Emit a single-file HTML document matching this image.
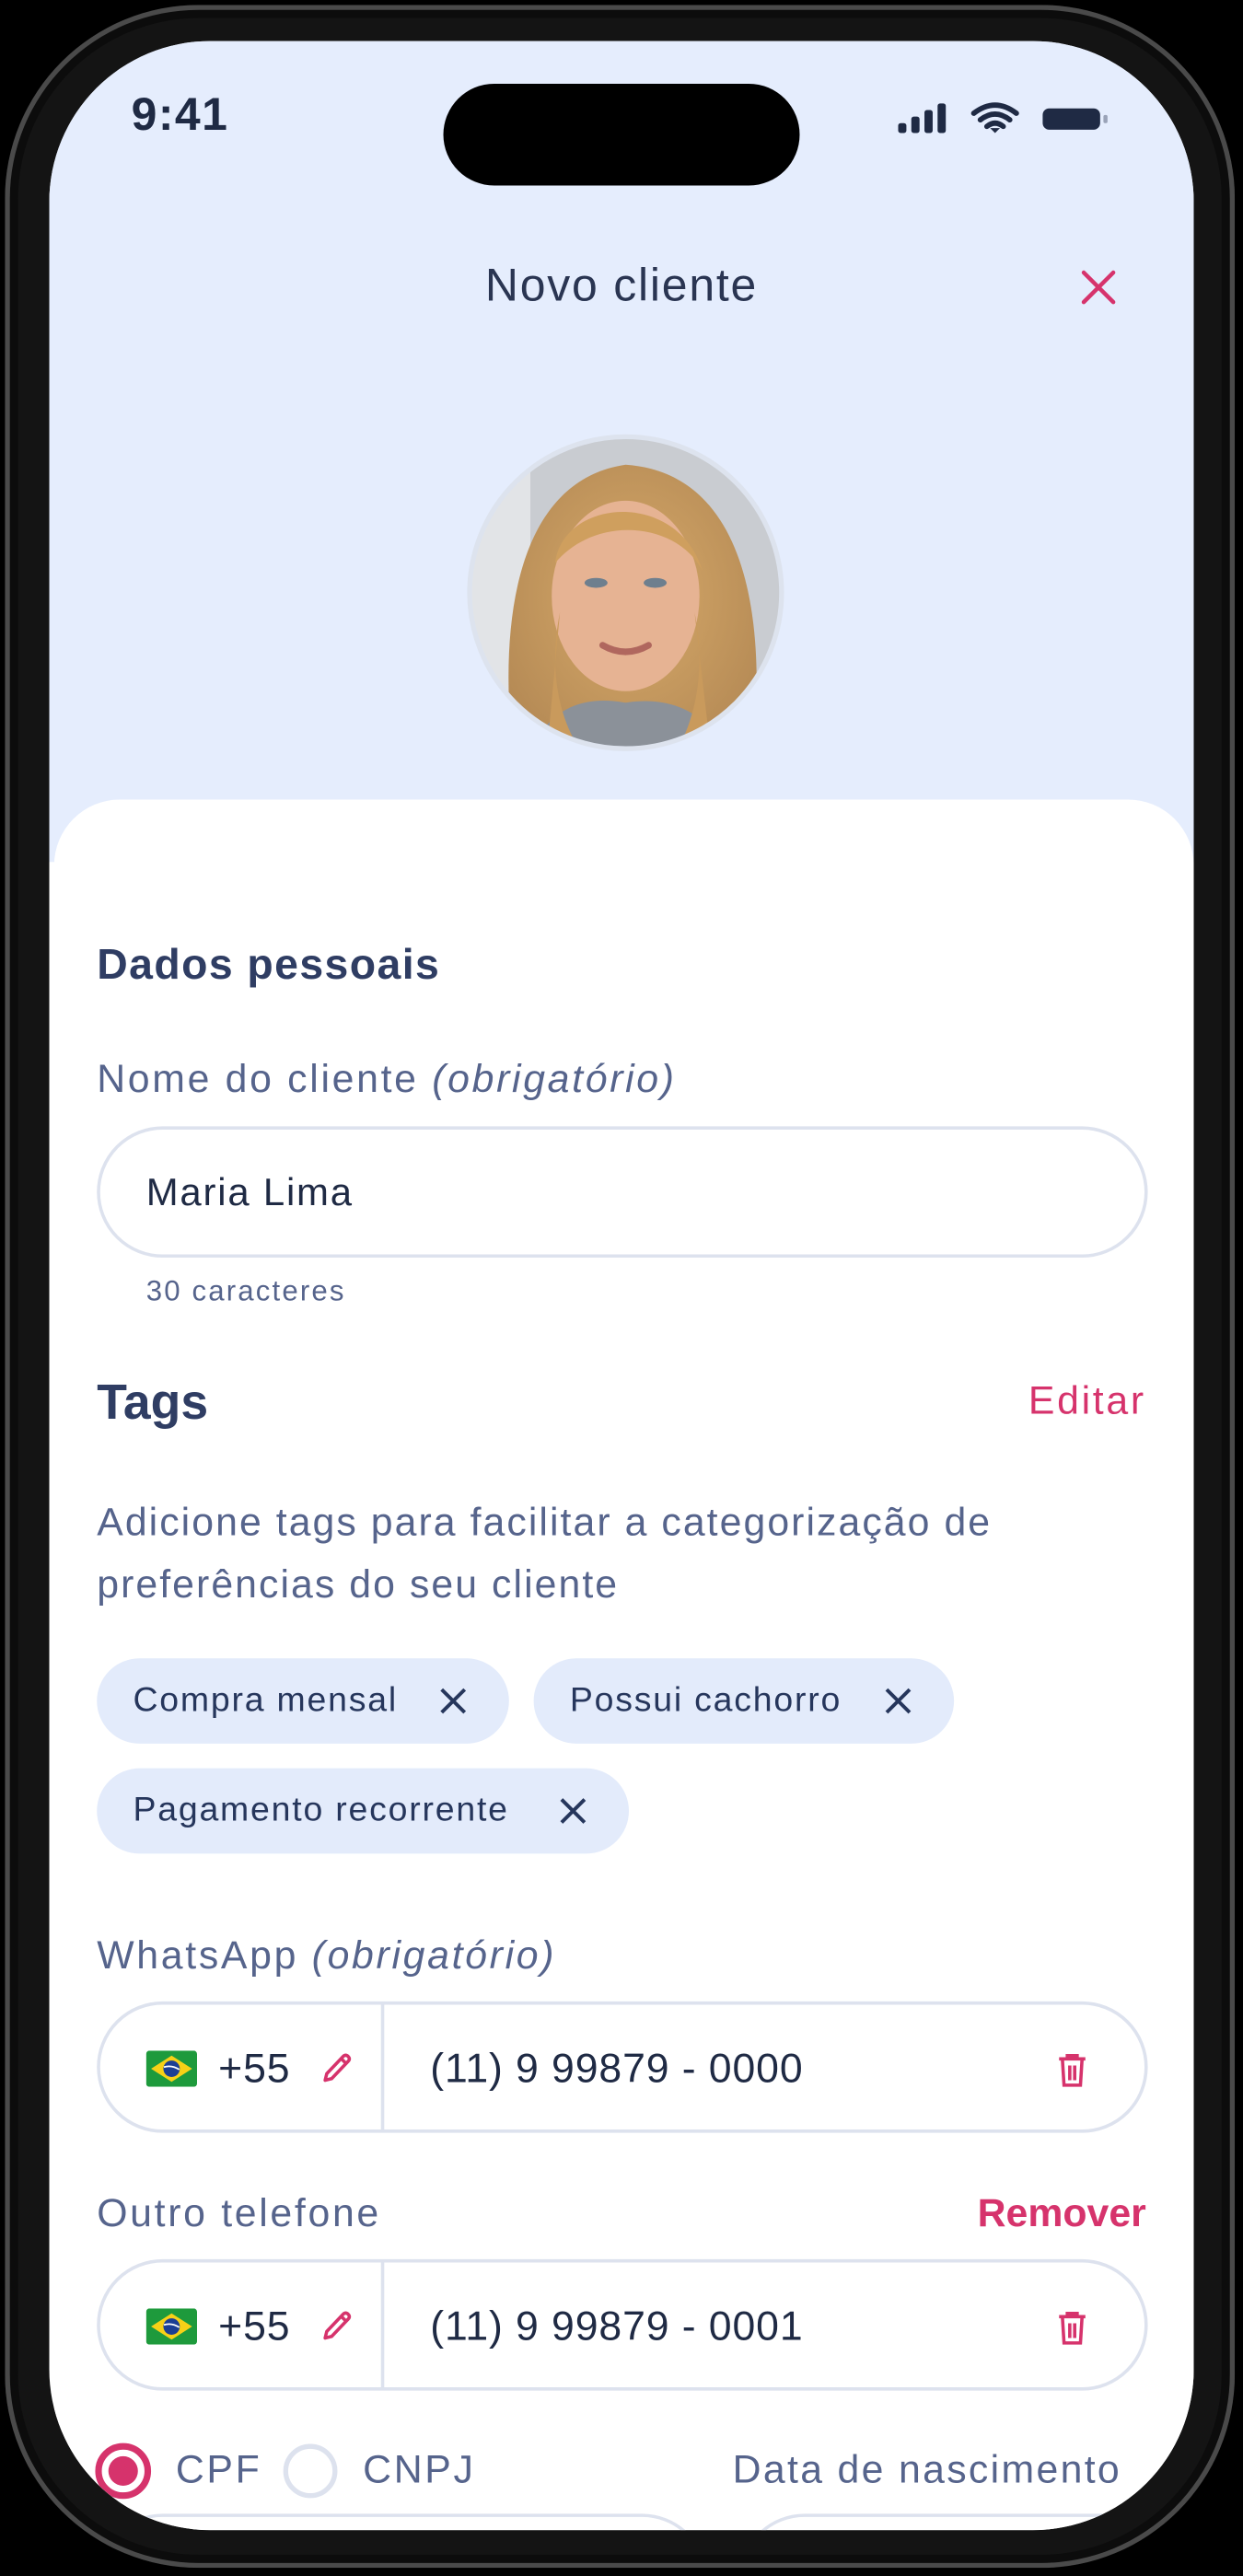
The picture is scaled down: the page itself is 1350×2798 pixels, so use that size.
<!DOCTYPE html>
<html><head><meta charset="utf-8"><style>
html,body{margin:0;padding:0;background:#000;width:1350px;height:2797px;overflow:hidden}
#w{position:absolute;left:0;top:0;width:757px;height:1569px;transform:scale(1.78336);transform-origin:0 0;font-family:"Liberation Sans",sans-serif}
.a{position:absolute}
.body{left:3px;top:3px;width:749px;height:1561px;border-radius:118px;background:#141414;box-shadow:inset 0 0 0 3px #4a4a4a,inset 0 0 0 8px #0c0c0c}
.screen{left:30px;top:25px;width:697px;height:1516px;border-radius:98px;background:#fff;overflow:hidden}
.top{left:0;top:0;width:697px;height:500px;background:#e5edfd}
.card{left:3px;top:462px;width:694px;height:1100px;background:#fff;border-radius:40px 40px 0 0}
.t{position:absolute;white-space:nowrap}
.lbl{font-size:24px;letter-spacing:1.5px;color:#56648c}
.inp{position:absolute;left:29px;width:640px;height:80px;border:2px solid #dde2ee;border-radius:40px;box-sizing:border-box}
.chip{position:absolute;height:52px;border-radius:26px;background:#e3ebfb;font-size:21px;letter-spacing:1px;color:#26365c;line-height:52px;padding-left:22px;box-sizing:border-box}
.chip svg{position:absolute;top:17px}
.num{font-size:25px;letter-spacing:0.5px;color:#1f2a44}
</style></head><body><div id="w">
<div class="a body"></div>
<div class="a screen">
 <div class="a top"></div>
 <div class="a card"></div>
 <div class="a" style="left:240px;top:26px;width:217px;height:62px;border-radius:31px;background:#000"></div>
 <div class="t" style="left:50px;top:29px;font-size:28px;letter-spacing:0.8px;font-weight:bold;color:#1f2a44">9:41</div>
 <svg class="a" style="left:516px;top:37px" width="135" height="20" viewBox="0 0 135 20">
  <rect x="1" y="13" width="5" height="6" rx="1.5" fill="#1f2a44"/><rect x="9" y="9" width="5" height="10" rx="1.5" fill="#1f2a44"/><rect x="17" y="5" width="5" height="14" rx="1.5" fill="#1f2a44"/><rect x="25" y="1" width="5" height="18" rx="1.5" fill="#1f2a44"/>
  <path d="M47 7 Q60 -3 73 7 M51 11 Q60 4 69 11 M55 15 Q60 11 65 15" stroke="#1f2a44" stroke-width="3.2" fill="none" stroke-linecap="round"/><path d="M57 16 L60 19 L63 16 Z" fill="#1f2a44"/>
  <rect x="89" y="4" width="35" height="13" rx="4" fill="#1f2a44"/><rect x="126" y="8" width="2.5" height="5" rx="1" fill="#9aa3b8"/>
 </svg>
 <div class="t" style="left:0;width:697px;text-align:center;top:133px;font-size:28px;letter-spacing:1px;color:#2a3552">Novo cliente</div>
 <svg class="a" style="left:628px;top:139px" width="22" height="22" viewBox="0 0 22 22"><path d="M2 2L20 20M20 2L2 20" stroke="#d6336c" stroke-width="2.5" stroke-linecap="round"/></svg>
 <svg class="a" style="left:253px;top:238px" width="196" height="196" viewBox="0 0 196 196">
  <defs><clipPath id="c"><circle cx="98" cy="98" r="94"/></clipPath>
  <radialGradient id="hair" cx="50%" cy="45%" r="60%"><stop offset="0" stop-color="#d7aa6a"/><stop offset="1" stop-color="#b58a55"/></radialGradient></defs>
  <g clip-path="url(#c)">
   <rect width="196" height="196" fill="#c9ccd1"/>
   <rect x="0" y="0" width="40" height="196" fill="#e2e4e7"/>
   <path d="M30 200 C20 120 30 30 98 20 C170 25 185 110 175 200Z" fill="url(#hair)"/>
   <path d="M40 196 C50 170 70 160 98 165 C130 160 150 175 160 196Z" fill="#8b9199"/>
   <ellipse cx="98" cy="100" rx="45" ry="58" fill="#e6b393"/>
   <path d="M55 80 C60 40 130 35 145 85 C130 55 80 50 55 80Z" fill="#cf9f5e"/>
   <ellipse cx="80" cy="92" rx="7" ry="3" fill="#6e7f8e"/><ellipse cx="116" cy="92" rx="7" ry="3" fill="#6e7f8e"/>
   <path d="M84 130 Q98 138 112 130" stroke="#b0675e" stroke-width="4" fill="none" stroke-linecap="round"/>
   <path d="M58 110 C50 150 60 180 72 196 L50 196Z M140 110 C148 150 138 180 128 196 L150 196Z" fill="#c99a5c"/>
  </g>
  <circle cx="98" cy="98" r="95" fill="none" stroke="#dde3ee" stroke-width="3"/>
 </svg>

 <div class="t" style="left:29px;top:547px;font-size:26px;letter-spacing:0.8px;font-weight:bold;color:#2f3d63">Dados pessoais</div>
 <div class="t lbl" style="left:29px;top:619px">Nome do cliente <i>(obrigatório)</i></div>
 <div class="inp" style="top:661px"></div>
 <div class="t" style="left:59px;top:688px;font-size:23.5px;letter-spacing:1px;color:#1f2a44">Maria Lima</div>
 <div class="t" style="left:59px;top:751px;font-size:17.5px;letter-spacing:1.2px;color:#56648c">30 caracteres</div>

 <div class="t" style="left:29px;top:813px;font-size:30px;font-weight:bold;color:#2f3d63">Tags</div>
 <div class="t" style="right:29px;top:815px;font-size:24px;letter-spacing:1.5px;color:#d6336c">Editar</div>
 <div class="t lbl" style="left:29px;top:884px;line-height:38px;letter-spacing:1.15px">Adicione tags para facilitar a categorização de<br>preferências do seu cliente</div>

 <div class="chip" style="left:29px;top:985px;width:251px">Compra mensal<svg style="left:208px" width="18" height="18" viewBox="0 0 18 18"><path d="M2 2L16 16M16 2L2 16" stroke="#26365c" stroke-width="2.2"/></svg></div>
 <div class="chip" style="left:295px;top:985px;width:256px">Possui cachorro<svg style="left:213px" width="18" height="18" viewBox="0 0 18 18"><path d="M2 2L16 16M16 2L2 16" stroke="#26365c" stroke-width="2.2"/></svg></div>
 <div class="chip" style="left:29px;top:1052px;width:324px">Pagamento recorrente<svg style="left:281px" width="18" height="18" viewBox="0 0 18 18"><path d="M2 2L16 16M16 2L2 16" stroke="#26365c" stroke-width="2.2"/></svg></div>

 <div class="t lbl" style="left:29px;top:1153px">WhatsApp <i>(obrigatório)</i></div>
 <div class="inp" style="top:1194px"></div>
 <div class="a" style="left:202px;top:1196px;width:2px;height:76px;background:#dde2ee"></div>
 <div class="t" style="right:29px;top:1310px;font-size:24px;font-weight:bold;color:#d6336c">Remover</div>
 <div class="t lbl" style="left:29px;top:1310px">Outro telefone</div>
 <div class="inp" style="top:1351px"></div>
 <div class="a" style="left:202px;top:1353px;width:2px;height:76px;background:#dde2ee"></div>

 <div class="a" style="left:0;top:1196px;width:697px;height:77px">
  <svg class="a" style="left:59px;top:28px" width="31" height="22" viewBox="0 0 31 22"><rect width="31" height="22" rx="2" fill="#1e9a3c"/><path d="M15.5 3L28 11L15.5 19L3 11Z" fill="#f7d117"/><circle cx="15.5" cy="11" r="5" fill="#1c3f94"/><path d="M10.8 10 Q15.5 8.5 20.2 11.5" stroke="#fff" stroke-width="1" fill="none"/></svg>
  <div class="t num" style="left:103px;top:25px">+55</div>
  <svg class="a" style="left:164px;top:28px" width="22" height="22" viewBox="0 0 22 22"><path d="M4 18L5 14L15 3.5Q16.5 2 18 3.5Q19.5 5 18 6.5L8 17Z" stroke="#d6336c" stroke-width="2" fill="none" stroke-linejoin="round"/><path d="M14 5L17 8" stroke="#d6336c" stroke-width="2"/></svg>
  <div class="t num" style="left:232px;top:25px">(11) 9 99879 - 0000</div>
  <svg class="a" style="left:614px;top:29px" width="18" height="22" viewBox="0 0 18 22"><path d="M1 4H17M6 4V2H12V4M3 4L4 20H14L15 4M7.5 8V17M10.5 8V17" stroke="#d6336c" stroke-width="2" fill="none"/></svg>
 </div>
 <div class="a" style="left:0;top:1353px;width:697px;height:77px">
  <svg class="a" style="left:59px;top:28px" width="31" height="22" viewBox="0 0 31 22"><rect width="31" height="22" rx="2" fill="#1e9a3c"/><path d="M15.5 3L28 11L15.5 19L3 11Z" fill="#f7d117"/><circle cx="15.5" cy="11" r="5" fill="#1c3f94"/><path d="M10.8 10 Q15.5 8.5 20.2 11.5" stroke="#fff" stroke-width="1" fill="none"/></svg>
  <div class="t num" style="left:103px;top:25px">+55</div>
  <svg class="a" style="left:164px;top:28px" width="22" height="22" viewBox="0 0 22 22"><path d="M4 18L5 14L15 3.5Q16.5 2 18 3.5Q19.5 5 18 6.5L8 17Z" stroke="#d6336c" stroke-width="2" fill="none" stroke-linejoin="round"/><path d="M14 5L17 8" stroke="#d6336c" stroke-width="2"/></svg>
  <div class="t num" style="left:232px;top:25px">(11) 9 99879 - 0001</div>
  <svg class="a" style="left:614px;top:29px" width="18" height="22" viewBox="0 0 18 22"><path d="M1 4H17M6 4V2H12V4M3 4L4 20H14L15 4M7.5 8V17M10.5 8V17" stroke="#d6336c" stroke-width="2" fill="none"/></svg>
 </div>

 <svg class="a" style="left:27px;top:1462px" width="36" height="36" viewBox="0 0 36 36"><circle cx="18" cy="18" r="15" fill="none" stroke="#d6336c" stroke-width="4"/><circle cx="18" cy="18" r="9" fill="#d6336c"/></svg>
 <div class="t lbl" style="left:77px;top:1466px">CPF</div>
 <svg class="a" style="left:141px;top:1462px" width="36" height="36" viewBox="0 0 36 36"><circle cx="18" cy="18" r="15" fill="none" stroke="#dde2ee" stroke-width="3"/></svg>
 <div class="t lbl" style="left:191px;top:1466px">CNPJ</div>
 <div class="t lbl" style="right:44px;top:1466px;letter-spacing:1.3px">Data de nascimento</div>
 <div class="a" style="left:29px;top:1506px;width:372px;height:80px;border:2px solid #dde2ee;border-radius:40px;box-sizing:border-box"></div>
 <div class="a" style="left:420px;top:1506px;width:320px;height:80px;border:2px solid #dde2ee;border-radius:40px;box-sizing:border-box"></div>
</div>
</div></body></html>
